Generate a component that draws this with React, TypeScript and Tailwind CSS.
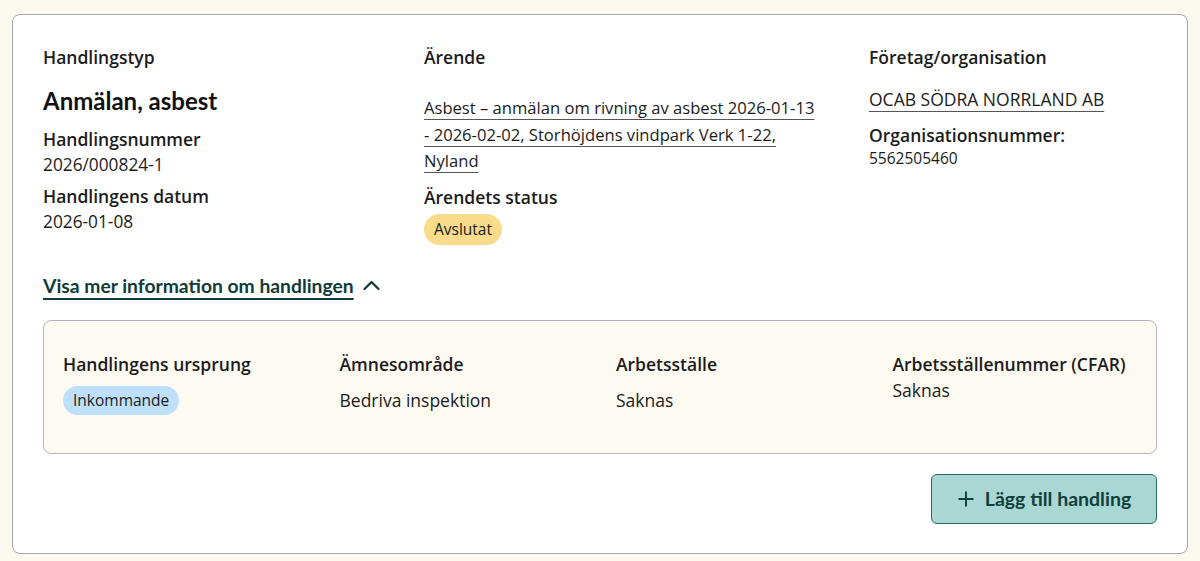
import React from "react";

const sans = "font-['Open_Sans','Noto_Sans',sans-serif]";
const head = "font-['Lato','Liberation_Sans',sans-serif]";
const label = "text-[17.5px] font-semibold leading-[24px]";

export default function App() {
  return (
    <div className={`min-h-[561px] w-[1200px] bg-[#fcf9ef] pt-[14px] pb-[8px] ${sans} text-[#1b1b1b]`}>
      <div className="mx-3 rounded-lg border border-[#a8a8a8] bg-white px-[30px] pt-[30px] pb-[29px]">
        <div className="grid grid-cols-[381px_445px_1fr]">
          {/* col 1 */}
          <div className="flex flex-col">
            <div className={label}>Handlingstyp</div>
            <div className={`${head} mt-[18px] text-[24px] font-bold leading-[28px] text-[#111]`}>Anmälan, asbest</div>
            <div className={`mt-3 ${label}`}>Handlingsnummer</div>
            <div className="mt-[1px] text-[17.3px] leading-[26px]">2026/000824-1</div>
            <div className={`mt-[6px] ${label}`}>Handlingens datum</div>
            <div className="mt-[1px] text-[17.3px] leading-[26px]">2026-01-08</div>
          </div>
          {/* col 2 */}
          <div className="flex flex-col">
            <div className={label}>Ärende</div>
            <a className="mt-[26px] w-[392px] text-[16.6px] leading-[26.5px] underline decoration-[#555] decoration-1 underline-offset-[5px]">
              Asbest – anmälan om rivning av asbest <span className="whitespace-nowrap">2026-01-13</span> - <span className="whitespace-nowrap">2026-02-02,</span> Storhöjdens vindpark Verk <span className="whitespace-nowrap">1-22,</span> Nyland
            </a>
            <div className={`mt-[10px] ${label}`}>Ärendets status</div>
            <div className="mt-[5px] flex">
              <span className="rounded-full bg-[#f8dc8c] px-[10px] text-[15.5px] leading-[31px]">Avslutat</span>
            </div>
          </div>
          {/* col 3 */}
          <div className="flex flex-col">
            <div className={label}>Företag/organisation</div>
            <a className="mt-[17px] text-[17.5px] leading-[26px] underline decoration-[#555] decoration-1 underline-offset-[5px]">
              OCAB SÖDRA NORRLAND AB
            </a>
            <div className={`mt-[11px] ${label}`}>Organisationsnummer:</div>
            <div className="text-[15.5px] leading-[22px]">5562505460</div>
          </div>
        </div>

        <div className="mt-[28px] flex items-center gap-[7px]">
          <a className={`${head} text-[19.3px] font-bold leading-[26px] text-[#0f3b38] underline decoration-[#0f3b38] decoration-[1.5px] underline-offset-[5px]`}>
            Visa mer information om handlingen
          </a>
          <svg width="21" height="21" viewBox="0 0 24 24" fill="none" stroke="#0f3b38" strokeWidth="2.6" strokeLinecap="round" strokeLinejoin="round">
            <path d="M4 16l8-8 8 8" />
          </svg>
        </div>

        <div className="mt-[21px] grid grid-cols-4 gap-8 rounded-lg border border-[#b5b5b5] bg-[#fdfaf2] px-[19px] pt-[31px] pb-[38px]">
          <div className="flex flex-col">
            <div className={label}>Handlingens ursprung</div>
            <div className="mt-[10px] flex">
              <span className="rounded-full bg-[#bfe0fa] px-[10px] text-[15.5px] leading-[29px]">Inkommande</span>
            </div>
          </div>
          <div className="flex flex-col">
            <div className={label}>Ämnesområde</div>
            <div className="mt-[11px] text-[17.5px] leading-[26px]">Bedriva inspektion</div>
          </div>
          <div className="flex flex-col">
            <div className={label}>Arbetsställe</div>
            <div className="mt-[11px] text-[17.5px] leading-[26px]">Saknas</div>
          </div>
          <div className="flex flex-col">
            <div className={label}>Arbetsställenummer (CFAR)</div>
            <div className="mt-[1px] text-[17.5px] leading-[26px]">Saknas</div>
          </div>
        </div>

        <div className="mt-5 flex justify-end">
          <button className={`${head} flex h-[50px] w-[226px] items-center justify-center gap-[10px] rounded-md border border-[#2f6561] bg-[#a9d8d4] text-[19.5px] font-bold text-[#10403c]`}>
            <svg width="18" height="18" viewBox="0 0 24 24" fill="none" stroke="#10403c" strokeWidth="2.6" strokeLinecap="round">
              <path d="M12 3v18M3 12h18" />
            </svg>
            Lägg till handling
          </button>
        </div>
      </div>
    </div>
  );
}
